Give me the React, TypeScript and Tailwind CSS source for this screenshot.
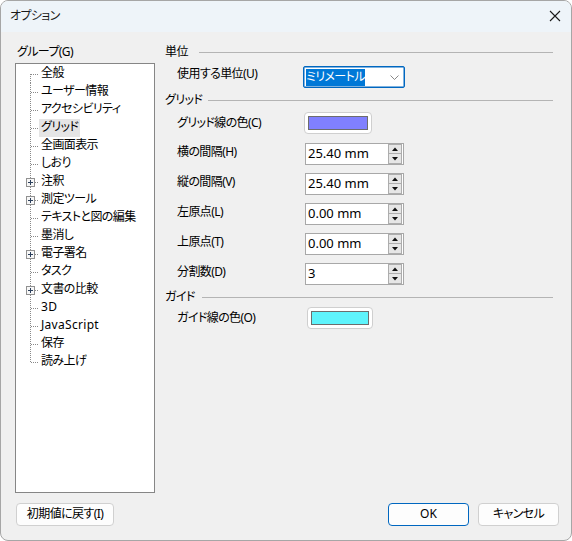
import React from "react";

const FONT = "font-['Noto_Sans','Noto_Sans_CJK_JP',sans-serif] [font-feature-settings:'palt'] tracking-[-0.6px]";

type Item = { label: string; plus?: boolean; selected?: boolean; latin?: boolean };

const items: Item[] = [
  { label: "全般" },
  { label: "ユーザー情報" },
  { label: "アクセシビリティ" },
  { label: "グリッド", selected: true },
  { label: "全画面表示" },
  { label: "しおり" },
  { label: "注釈", plus: true },
  { label: "測定ツール", plus: true },
  { label: "テキストと図の編集" },
  { label: "墨消し" },
  { label: "電子署名", plus: true },
  { label: "タスク" },
  { label: "文書の比較", plus: true },
  { label: "3D", latin: true },
  { label: "JavaScript", latin: true },
  { label: "保存" },
  { label: "読み上げ" },
];

function Connector({ first, last, plus }: { first: boolean; last: boolean; plus?: boolean }) {
  const y1 = first ? 9 : 0;
  const y2 = last ? 10 : 18;
  return (
    <svg width="23" height="18" viewBox="0 0 23 18" className="shrink-0" shapeRendering="crispEdges">
      <line x1="14.5" y1={y1} x2="14.5" y2={y2} stroke="#8a8a8a" strokeDasharray="1 1" />
      <line x1="15" y1="9.5" x2="23" y2="9.5" stroke="#8a8a8a" strokeDasharray="1 1" />
      {plus && (
        <g>
          <rect x="10.5" y="5.5" width="8" height="8" fill="#f7f7f7" stroke="#919191" />
          <line x1="12" y1="9.5" x2="17" y2="9.5" stroke="#2b3f5c" />
          <line x1="14.5" y1="7" x2="14.5" y2="12" stroke="#2b3f5c" />
        </g>
      )}
    </svg>
  );
}

function Header({ text, gap }: { text: string; gap: string }) {
  return (
    <div className="h-[18px] flex items-center">
      <span className="leading-[18px]">{text}</span>
      <div className={`flex-1 h-px bg-[#b4b4b4] ${gap}`} />
    </div>
  );
}

function SpinArrows() {
  return (
    <div className="flex flex-col w-[14px] h-[20px] mr-[1px]">
      <div className="h-[10px] border border-[#adadad] bg-[#e6e6e6] flex items-center justify-center">
        <svg width="6" height="4" viewBox="0 0 6 4"><path d="M0 4 L3 0.5 L6 4 Z" fill="#111" /></svg>
      </div>
      <div className="h-[10px] border border-t-0 border-[#adadad] bg-[#e6e6e6] flex items-center justify-center">
        <svg width="6" height="4" viewBox="0 0 6 4"><path d="M0 0 L3 3.5 L6 0 Z" fill="#111" /></svg>
      </div>
    </div>
  );
}

function SpinRow({ label, value, mt }: { label: string; value: string; mt: string }) {
  return (
    <div className={`flex items-center h-[22px] ${mt}`}>
      <div className="w-[140px] pl-[12px] pb-[4px] leading-[18px]">{label}</div>
      <div className="w-[99px] h-[22px] border border-[#a8a8a8] bg-white flex items-center">
        <span className="flex-1 pl-[2px] pb-[3px] text-[13px] leading-[18px] tracking-normal">{value}</span>
        <SpinArrows />
      </div>
    </div>
  );
}

export default function App() {
  return (
    <div className={`w-[572px] h-[541px] border border-[#a6a6a6] rounded-[8px] overflow-hidden bg-[#f0f0f0] flex flex-col text-[12px] text-black ${FONT}`}>
      {/* Title bar */}
      <div className="h-[31px] bg-[#eef4f9] flex items-center justify-between pl-[9px] pr-[10px] shrink-0">
        <span className="text-[12px] text-[#1a1a1a] pb-[2px]">オプション</span>
        <svg width="12" height="12" viewBox="0 0 12 12" className="mb-[2px]">
          <path d="M1 1 L11 11 M11 1 L1 11" stroke="#1a1a1a" strokeWidth="1.1" />
        </svg>
      </div>

      {/* Body */}
      <div className="h-[461px] flex pl-[14px] pr-[18px] shrink-0">
        {/* Left */}
        <div className="w-[140px] flex flex-col">
          <div className="mt-[11px] h-[18px] leading-[18px] pl-[2px]">グループ(G)</div>
          <div className="mt-[2px] h-[430px] border border-[#868686] bg-white pt-[1px]">
            {items.map((it, i) => (
              <div key={it.label} className="h-[18px] flex items-center">
                <Connector first={i === 0} last={i === items.length - 1} plus={it.plus} />
                <span className={`h-[18px] leading-[18px] px-[2px] whitespace-nowrap ${it.selected ? "bg-[#e5e5e5]" : ""} ${it.latin ? "tracking-[0.3px]" : ""}`}>
                  <span className="relative top-[-1px]">{it.label}</span>
                </span>
              </div>
            ))}
          </div>
        </div>

        {/* Right */}
        <div className="flex-1 ml-[10px] flex flex-col">
          <div className="mt-[11px]">
            <Header text="単位" gap="ml-[11px]" />
          </div>
          <div className="flex items-center h-[22px] mt-[5px]">
            <div className="w-[138px] pl-[12px] pb-[6px] leading-[18px]">使用する単位(U)</div>
            <div className="w-[102px] h-[22px] border border-[#0067c0] shadow-[inset_0_0_0_0.5px_#0067c0] rounded-[2px] bg-white flex items-center">
              <span className="ml-[2px] bg-[#0078d7] text-white h-[17px] leading-[16px] text-[12px]">ミリメートル</span>
              <div className="flex-1" />
              <svg width="9" height="5" viewBox="0 0 9 5" className="mr-[5px]">
                <path d="M0.5 0.5 L4.5 4.5 L8.5 0.5" stroke="#7a7a7a" strokeWidth="0.9" fill="none" />
              </svg>
            </div>
          </div>

          <div className="mt-[3px]">
            <Header text="グリッド" gap="ml-[6px]" />
          </div>
          <div className="flex items-center h-[22px] mt-[3px]">
            <div className="w-[139px] pl-[12px] leading-[18px]">グリッド線の色(C)</div>
            <div className="w-[68px] h-[22px] rounded-[4px] border border-[#cfcfcf] bg-white flex items-center justify-center">
              <div className="w-[60px] h-[14px] bg-[#8080ff] border border-[#6d6d6d]" />
            </div>
          </div>

          <SpinRow label="横の間隔(H)" value="25.40 mm" mt="mt-[9px]" />
          <SpinRow label="縦の間隔(V)" value="25.40 mm" mt="mt-[8px]" />
          <SpinRow label="左原点(L)" value="0.00 mm" mt="mt-[8px]" />
          <SpinRow label="上原点(T)" value="0.00 mm" mt="mt-[8px]" />
          <SpinRow label="分割数(D)" value="3" mt="mt-[8px]" />

          <div className="mt-[3px]">
            <Header text="ガイド" gap="ml-[7px]" />
          </div>
          <div className="flex items-center h-[22px] mt-[1px]">
            <div className="w-[142px] pl-[12px] leading-[18px]">ガイド線の色(O)</div>
            <div className="w-[66px] h-[22px] rounded-[4px] border border-[#cfcfcf] bg-white flex items-center justify-center">
              <div className="w-[58px] h-[14px] bg-[#5ef4fc] border border-[#6d6d6d]" />
            </div>
          </div>
        </div>
      </div>

      {/* Footer */}
      <div className="flex items-start pt-[10px] pl-[15px] pr-[12px] h-[47px] shrink-0">
        <button className="w-[98px] h-[23px] rounded-[4px] border border-[#d0d0d0] bg-[#fdfdfd] flex items-center justify-center leading-[18px]">
          <span className="pb-[1px]">初期値に戻す(I)</span>
        </button>
        <div className="flex-1" />
        <button className="w-[81px] h-[23px] rounded-[4px] border border-[#0067c0] bg-[#fdfdfd] flex items-center justify-center leading-[18px]">
          <span className="pb-[1px] tracking-normal">OK</span>
        </button>
        <button className="ml-[9px] w-[81px] h-[23px] rounded-[4px] border border-[#d0d0d0] bg-[#fdfdfd] flex items-center justify-center leading-[18px]">
          <span className="pb-[1px]">キャンセル</span>
        </button>
      </div>
    </div>
  );
}
